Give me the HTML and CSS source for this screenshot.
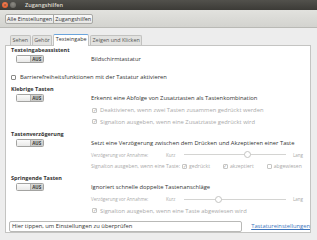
FILE: index.html
```html
<!DOCTYPE html>
<html lang="de">
<head>
    <meta charset="UTF-8">
    <title>Zugangshilfen</title>
    <link rel="stylesheet" href="styles.css">
</head>
<body>
    <div class="window">
        <div class="titlebar">
            <span class="wbtn close">×</span>
            <span class="wbtn min"></span>
            <span class="title">Zugangshilfen</span>
        </div>

        <div class="toolbar">
            <div class="crumbs">
                <span class="crumb">Alle Einstellungen</span>
                <span class="crumb">Zugangshilfen</span>
            </div>
        </div>

        <div class="main">
            <div class="tabs">
                <span class="tab">Sehen</span>
                <span class="tab">Gehör</span>
                <span class="tab active">Texteingabe</span>
                <span class="tab">Zeigen und Klicken</span>
            </div>

            <div class="panel">
                <section class="group first">
                    <div class="heading">Texteingabeassistent</div>
                    <div class="row">
                        <div class="switch-cell"><div class="switch"><span class="knob"></span><span class="state">AUS</span></div></div>
                        <div class="desc">Bildschirmtastatur</div>
                    </div>
                </section>

                <div class="check-row">
                    <span class="box"></span>
                    <span>Barrierefreiheitsfunktionen mit der Tastatur aktivieren</span>
                </div>

                <section class="group">
                    <div class="heading">Klebrige Tasten</div>
                    <div class="row">
                        <div class="switch-cell"><div class="switch"><span class="knob"></span><span class="state">AUS</span></div></div>
                        <div class="desc">Erkennt eine Abfolge von Zusatztasten als Tastenkombination</div>
                    </div>
                    <div class="subs">
                        <div class="sub"><span class="box checked"></span>Deaktivieren, wenn zwei Tasten zusammen gedrückt werden</div>
                        <div class="sub"><span class="box checked"></span>Signalton ausgeben, wenn eine Zusatztaste gedrückt wird</div>
                    </div>
                </section>

                <section class="group">
                    <div class="heading">Tastenverzögerung</div>
                    <div class="row">
                        <div class="switch-cell"><div class="switch"><span class="knob"></span><span class="state">AUS</span></div></div>
                        <div class="desc">Setzt eine Verzögerung zwischen dem Drücken und Akzeptieren einer Taste</div>
                    </div>
                    <div class="subs">
                        <div class="sub small">
                            <span class="slider-label">Verzögerung vor Annahme:</span>
                            <span class="mark">Kurz</span>
                            <div class="track"><span class="handle" style="left: 62%"></span></div>
                            <span class="mark">Lang</span>
                        </div>
                        <div class="sub options">
                            <span class="lead">Signalton ausgeben, wenn eine Taste:</span>
                            <span class="opt"><span class="box checked"></span>gedrückt</span>
                            <span class="opt"><span class="box checked"></span>akzeptiert</span>
                            <span class="opt"><span class="box"></span>abgewiesen</span>
                        </div>
                    </div>
                </section>

                <section class="group">
                    <div class="heading">Springende Tasten</div>
                    <div class="row">
                        <div class="switch-cell"><div class="switch"><span class="knob"></span><span class="state">AUS</span></div></div>
                        <div class="desc">Ignoriert schnelle doppelte Tastenanschläge</div>
                    </div>
                    <div class="subs">
                        <div class="sub small">
                            <span class="slider-label">Verzögerung vor Annahme:</span>
                            <span class="mark">Kurz</span>
                            <div class="track"><span class="handle" style="left: 34%"></span></div>
                            <span class="mark">Lang</span>
                        </div>
                        <div class="sub"><span class="box checked"></span>Signalton ausgeben, wenn eine Taste abgewiesen wird</div>
                    </div>
                </section>

                <div class="bottom">
                    <div class="entry">Hier tippen, um Einstellungen zu überprüfen</div>
                    <a class="link" href="#">Tastatureinstellungen</a>
                </div>
            </div>
        </div>
    </div>
</body>
</html>
```

FILE: styles.css
```css
* {
    margin: 0;
    padding: 0;
    box-sizing: border-box;
}

body {
    font-family: 'Open Sans', 'Noto Sans', sans-serif;
    font-size: 5.8px;
    color: #3c3c3c;
    background: #e6e6e4;
    width: 317px;
    height: 240px;
    overflow: hidden;
    white-space: nowrap;
}

.window {
    height: 240px;
    display: flex;
    flex-direction: column;
}

/* title bar */
.titlebar {
    height: 10px;
    background: linear-gradient(#52514c, #3c3b37);
    display: flex;
    align-items: center;
    padding-left: 2px;
    gap: 2px;
}

.wbtn {
    width: 6px;
    height: 6px;
    border-radius: 50%;
    display: flex;
    align-items: center;
    justify-content: center;
    font-size: 5px;
    line-height: 1;
    color: #3c3b37;
}

.wbtn.close {
    background: radial-gradient(circle at 50% 35%, #f3845a, #df5320);
}

.wbtn.min {
    background: radial-gradient(circle at 50% 35%, #8d8b84, #5f5e59);
}

.title {
    margin-left: 7px;
    color: #dfdbd2;
    font-weight: 600;
    font-size: 5.6px;
}

/* toolbar */
.toolbar {
    height: 18px;
    background: linear-gradient(#e2e2de, #d3d3cf);
    border-bottom: 1px solid #b9b9b5;
    display: flex;
    align-items: center;
    padding-left: 5px;
}

.crumbs {
    display: flex;
    height: 10px;
    border: 1px solid #a9a9a5;
    border-radius: 2px;
    background: linear-gradient(#fafafa, #e6e6e4);
}

.crumb {
    font-size: 5.5px;
    line-height: 8px;
    padding: 0 1px;
    color: #333;
}

.crumb + .crumb {
    border-left: 1px solid #a9a9a5;
}

/* notebook */
.main {
    flex: 1;
    background: #ededed;
    padding: 6px 6px 0 5px;
}

.tabs {
    display: flex;
    padding-left: 5px;
    height: 11px;
    align-items: flex-end;
}

.tab {
    height: 10px;
    line-height: 9px;
    font-size: 5.4px;
    padding: 0 1.5px;
    border: 1px solid #c2c2c0;
    border-bottom: none;
    border-radius: 2px 2px 0 0;
    background: #e2e2e0;
    color: #555;
    margin-right: 1px;
}

.tab.active {
    height: 12px;
    background: #fff;
    border-top: 1.5px solid #6aa4dc;
    color: #333;
    position: relative;
    z-index: 1;
    margin-bottom: -1px;
}

.panel {
    height: 188px;
    background: #fff;
    border: 1px solid #c4c4c2;
    padding: 1px 0 0 5px;
}

.group {
    margin-top: 5px;
}

.group.first {
    margin-top: 0;
}

.heading {
    height: 6px;
    line-height: 6px;
    font-weight: 700;
    font-size: 5.5px;
    color: #333;
}

.row {
    display: flex;
    align-items: center;
    height: 8px;
    margin-top: 2px;
}

.switch-cell {
    width: 80px;
    padding-left: 5px;
}

.switch {
    width: 28px;
    height: 8px;
    border: 1px solid #a3a3a1;
    border-radius: 1.5px;
    display: flex;
    overflow: hidden;
}

.switch .knob {
    flex: 1;
    background: linear-gradient(#fbfbfb, #e9e9e8);
    border-right: 1px solid #b4b4b2;
}

.switch .state {
    flex: 1;
    background: linear-gradient(#d6d6d4, #c9c9c7);
    font-weight: 700;
    font-size: 4.5px;
    line-height: 6px;
    text-align: center;
    color: #3a3a3a;
}

.desc {
    color: #333;
}

.check-row {
    display: flex;
    align-items: center;
    height: 8px;
    margin-top: 10px;
    color: #333;
}

.box {
    width: 5px;
    height: 5px;
    border: 0.8px solid #8a8a88;
    border-radius: 1px;
    background: #fff;
    margin-right: 4px;
    flex-shrink: 0;
    display: inline-flex;
    align-items: center;
    justify-content: center;
    font-size: 4.5px;
    line-height: 1;
}

.subs {
    padding-left: 80px;
    padding-top: 4px;
    display: flex;
    flex-direction: column;
    gap: 3.5px;
    color: #a9a9a9;
}

.sub {
    height: 8px;
    display: flex;
    align-items: center;
}

.sub.small {
    font-size: 4.5px;
}

.sub.options {
    font-size: 5.1px;
}

.subs .box {
    border-color: #c6c6c4;
    margin-left: 1px;
    margin-right: 3px;
}

.box.checked::after {
    content: '✓';
    color: #a9a9a9;
}

.slider-label {
    width: 75px;
    flex-shrink: 0;
}

.mark {
    width: 18px;
    flex-shrink: 0;
}

.track {
    width: 102px;
    height: 1px;
    background: #d4d4d2;
    position: relative;
    margin-right: 7px;
    flex-shrink: 0;
}

.handle {
    position: absolute;
    top: -3px;
    width: 7px;
    height: 7px;
    border-radius: 50%;
    border: 1px solid #c4c4c2;
    background: #fff;
    margin-left: -3.5px;
}

.lead {
    margin-right: 1px;
}

.opt {
    display: flex;
    align-items: center;
    margin-right: 12px;
}

.opt .box {
    margin-right: 2px;
}

.bottom {
    display: flex;
    align-items: center;
    margin-top: 6px;
    margin-left: -2px;
}

.entry {
    width: 235px;
    height: 11px;
    line-height: 9px;
    border: 1px solid #b9b9b7;
    border-radius: 2px;
    padding-left: 2px;
    color: #333;
    background: #fff;
}

.link {
    margin-left: 9px;
    font-size: 5.8px;
    color: #3d75bd;
    text-decoration: underline;
}
```
